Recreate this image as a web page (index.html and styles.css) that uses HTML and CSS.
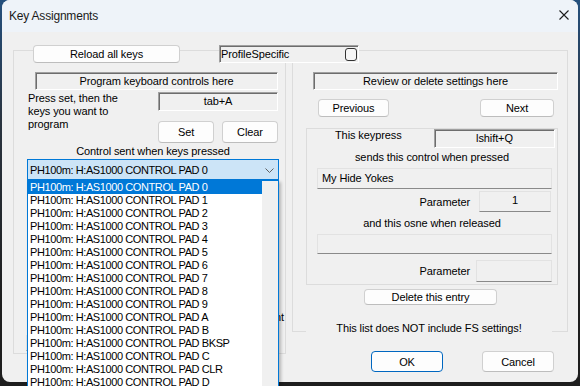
FILE: index.html
```html
<!DOCTYPE html>
<html lang="en">
<head>
    <meta charset="UTF-8">
    <title>Key Assignments</title>
    <link rel="stylesheet" href="styles.css">
</head>
<body>
    <div class="window">
        <div class="titlebar">
            <span class="title">Key Assignments</span>
            <svg class="close" width="10" height="10" viewBox="0 0 10 10">
                <path d="M0.5 0.5L9.5 9.5M9.5 0.5L0.5 9.5" stroke="#1b1b1b" stroke-width="1.1" fill="none"/>
            </svg>
        </div>

        <div class="content">
            <div class="top-row">
                <button class="button reload">Reload all keys</button>
                <div class="sunken profile">
                    <span>ProfileSpecific</span>
                    <span class="checkbox"></span>
                </div>
            </div>

            <div class="groups">
                <!-- left: program a new key -->
                <div class="group left-group">
                    <div class="sunken banner program">Program keyboard controls here</div>
                    <div class="program-row">
                        <p class="hint">Press set, then the keys you want to program</p>
                        <div class="program-controls">
                            <div class="sunken keys">tab+A</div>
                            <div class="button-row">
                                <button class="button small">Set</button>
                                <button class="button small">Clear</button>
                            </div>
                        </div>
                    </div>
                    <div class="combo-block">
                        <div class="caption">Control sent when keys pressed</div>
                        <div class="combo">
                            <span>PH100m: H:AS1000 CONTROL PAD 0</span>
                            <svg class="chevron" width="9" height="5" viewBox="0 0 9 5">
                                <path d="M0.5 0.5L4.5 4.5L8.5 0.5" stroke="#5f5f5f" stroke-width="1" fill="none"/>
                            </svg>
                            <div class="dropdown">
                                <ul class="options">
                                    <li class="selected">PH100m: H:AS1000 CONTROL PAD 0</li>
                                    <li>PH100m: H:AS1000 CONTROL PAD 1</li>
                                    <li>PH100m: H:AS1000 CONTROL PAD 2</li>
                                    <li>PH100m: H:AS1000 CONTROL PAD 3</li>
                                    <li>PH100m: H:AS1000 CONTROL PAD 4</li>
                                    <li>PH100m: H:AS1000 CONTROL PAD 5</li>
                                    <li>PH100m: H:AS1000 CONTROL PAD 6</li>
                                    <li>PH100m: H:AS1000 CONTROL PAD 7</li>
                                    <li>PH100m: H:AS1000 CONTROL PAD 8</li>
                                    <li>PH100m: H:AS1000 CONTROL PAD 9</li>
                                    <li>PH100m: H:AS1000 CONTROL PAD A</li>
                                    <li>PH100m: H:AS1000 CONTROL PAD B</li>
                                    <li>PH100m: H:AS1000 CONTROL PAD BKSP</li>
                                    <li>PH100m: H:AS1000 CONTROL PAD C</li>
                                    <li>PH100m: H:AS1000 CONTROL PAD CLR</li>
                                    <li>PH100m: H:AS1000 CONTROL PAD D</li>
                                </ul>
                                <div class="scrollbar"></div>
                            </div>
                        </div>
                    </div>
                    <div class="repeat-label">Repeat count</div>
                    <div class="edit repeat-edit"></div>
                </div>

                <!-- right: review existing entries -->
                <div class="right-col">
                    <div class="group right-group">
                        <div class="sunken banner">Review or delete settings here</div>
                        <div class="nav-row">
                            <button class="button prev">Previous</button>
                            <button class="button next">Next</button>
                        </div>
                        <div class="group entry">
                            <div class="entry-row">
                                <span>This keypress</span>
                                <div class="sunken keys entry-keys">lshift+Q</div>
                            </div>
                            <div class="caption entry-caption">sends this control when pressed</div>
                            <div class="edit entry-edit">My Hide Yokes</div>
                            <div class="param-row">
                                <span>Parameter</span>
                                <div class="edit param">1</div>
                            </div>
                            <div class="caption released">and this osne when released</div>
                            <div class="edit entry-edit empty"></div>
                            <div class="param-row second">
                                <span>Parameter</span>
                                <div class="edit param"></div>
                            </div>
                        </div>
                        <button class="button delete">Delete this entry</button>
                        <div class="note">This list does NOT include FS settings!</div>
                    </div>
                    <div class="footer">
                        <button class="button dialog-button default">OK</button>
                        <button class="button dialog-button">Cancel</button>
                    </div>
                </div>
            </div>
        </div>
    </div>
</body>
</html>
```

FILE: styles.css
```css
* {
    box-sizing: border-box;
    margin: 0;
    padding: 0;
}

body {
    height: 386px;
    overflow: hidden;
    background: linear-gradient(#24507e 0, #2a3440 120px, #1e1e1e 300px);
    font-family: "Liberation Sans", Arial, sans-serif;
    font-size: 11px;
    letter-spacing: -0.1px;
    color: #000;
}

.window {
    margin-left: 2px;
    width: 576px;
    height: 382px;
    background-color: #f0f0f0;
    border-radius: 8px;
}

.titlebar {
    height: 32px;
    display: flex;
    align-items: center;
    justify-content: space-between;
    padding: 0 9px 0 7px;
    background-color: #eef3f9;
    border-radius: 8px 8px 0 0;
}

.title {
    font-size: 12px;
    letter-spacing: -0.2px;
    color: #1a1a1a;
}

.close {
    margin-top: -2px;
}

.content {
    padding: 13px 10px 0 11px;
}

.top-row {
    display: flex;
    position: relative;
    z-index: 1;
}

.button {
    font: inherit;
    letter-spacing: inherit;
    color: #000;
    background-color: #fdfdfd;
    border: 1px solid #d0d0d0;
    border-bottom-color: #bdbdbd;
    border-radius: 4px;
    padding: 0;
}

.reload {
    width: 147px;
    height: 18px;
    margin-left: 20px;
}

.sunken {
    border: 1px solid;
    border-color: #a0a0a0 #ffffff #ffffff #a0a0a0;
    box-shadow: inset 1px 1px 0 #6d6d6d;
    background-color: #f0f0f0;
}

.profile {
    width: 140px;
    height: 18px;
    margin-left: 39px;
    display: flex;
    align-items: center;
    justify-content: space-between;
    padding: 0 1px 0 1px;
}

.checkbox {
    width: 12px;
    height: 13px;
    border: 1px solid #333;
    border-radius: 3px;
    background-color: #f6f6f6;
}

.groups {
    display: grid;
    grid-template-columns: 273px 276px;
    column-gap: 6px;
    align-items: start;
    margin-top: -13px;
}

.group {
    border: 1px solid #dcdcdc;
}

.left-group {
    height: 304px;
    padding: 21px 7px 0 14px;
}

.right-group {
    height: 282px;
    padding: 21px 9px 0 20px;
}

.banner {
    height: 18px;
    line-height: 16px;
    text-align: center;
}

.program {
    margin-left: 7px;
}

.program-row {
    display: flex;
    margin-top: 2px;
}

.hint {
    width: 100px;
    line-height: 13px;
}

.program-controls {
    margin-left: auto;
    width: 120px;
}

.keys {
    height: 19px;
    line-height: 17px;
    text-align: center;
}

.button-row {
    display: flex;
    gap: 8px;
    margin-top: 10px;
}

.small {
    width: 56px;
    height: 22px;
}

.caption {
    line-height: 13px;
    text-align: center;
}

.combo-block {
    width: 252px;
    margin: 2px 0 0 -1px;
}

.combo {
    position: relative;
    height: 21px;
    margin-top: 1px;
    display: flex;
    align-items: center;
    justify-content: space-between;
    padding: 0 4px 0 2px;
    border: 1px solid #0078d7;
    background-color: #cce4f7;
    letter-spacing: -0.4px;
}

.chevron {
    margin-top: 1px;
}

.dropdown {
    position: absolute;
    left: -1px;
    top: calc(100% + 1px);
    z-index: 5;
    width: 252px;
    height: 212px;
    display: flex;
    border: 1px solid #0078d7;
    background-color: #fff;
    box-shadow: 2px 2px 3px rgba(0, 0, 0, 0.25);
}

.options {
    flex: 1;
    list-style: none;
}

.options li {
    height: 13px;
    line-height: 13px;
    padding-left: 2px;
    white-space: nowrap;
}

.options .selected {
    background-color: #0078d7;
    color: #fff;
}

.scrollbar {
    width: 16px;
    background-color: #f0f0f0;
}

.repeat-label {
    margin: 131px -6px 0 0;
    line-height: 13px;
    text-align: right;
}

.edit {
    border: 1px solid #e2e2e2;
    border-bottom-color: #8a8a8a;
    background-color: #f0f0f0;
}

.repeat-edit {
    width: 120px;
    height: 16px;
    margin: 11px 0 0 -2px;
}

.nav-row {
    display: flex;
    justify-content: space-between;
    margin-top: 9px;
    padding: 0 4px 0 5px;
}

.prev {
    width: 71px;
    height: 18px;
}

.next {
    width: 74px;
    height: 18px;
}

.entry {
    height: 157px;
    margin: 11px 0 0 -7px;
}

.entry-row {
    display: flex;
    align-items: flex-start;
    padding-left: 28px;
    line-height: 13px;
}

.entry-keys {
    width: 121px;
    margin: 0 2px 0 auto;
    line-height: 17px;
}

.entry-caption {
    margin-top: 3px;
}

.entry-edit {
    height: 21px;
    margin: 4px 5px 0 10px;
    padding-left: 4px;
    line-height: 19px;
}

.entry-edit.empty {
    height: 20px;
}

.param-row {
    display: flex;
    justify-content: flex-end;
    align-items: center;
    gap: 9px;
    margin-top: 2px;
    padding-right: 6px;
}

.param {
    width: 72px;
    height: 21px;
    line-height: 17px;
    text-align: center;
}

.released {
    margin-top: 5px;
}

.param-row.second {
    gap: 6px;
    margin-top: 6px;
    padding-right: 5px;
}

.param-row.second .param {
    width: 76px;
    height: 22px;
}

.delete {
    display: block;
    width: 133px;
    height: 16px;
    margin: 4px 0 0 51px;
}

.note {
    width: 246px;
    margin: 17px 0 0 -7px;
    line-height: 13px;
    text-align: center;
    background-color: #f0f0f0;
}

.footer {
    display: flex;
    justify-content: flex-end;
    gap: 39px;
    margin-top: 19px;
    padding-right: 14px;
}

.dialog-button {
    width: 72px;
    height: 21px;
}

.default {
    border-color: #0067c0;
}
```
